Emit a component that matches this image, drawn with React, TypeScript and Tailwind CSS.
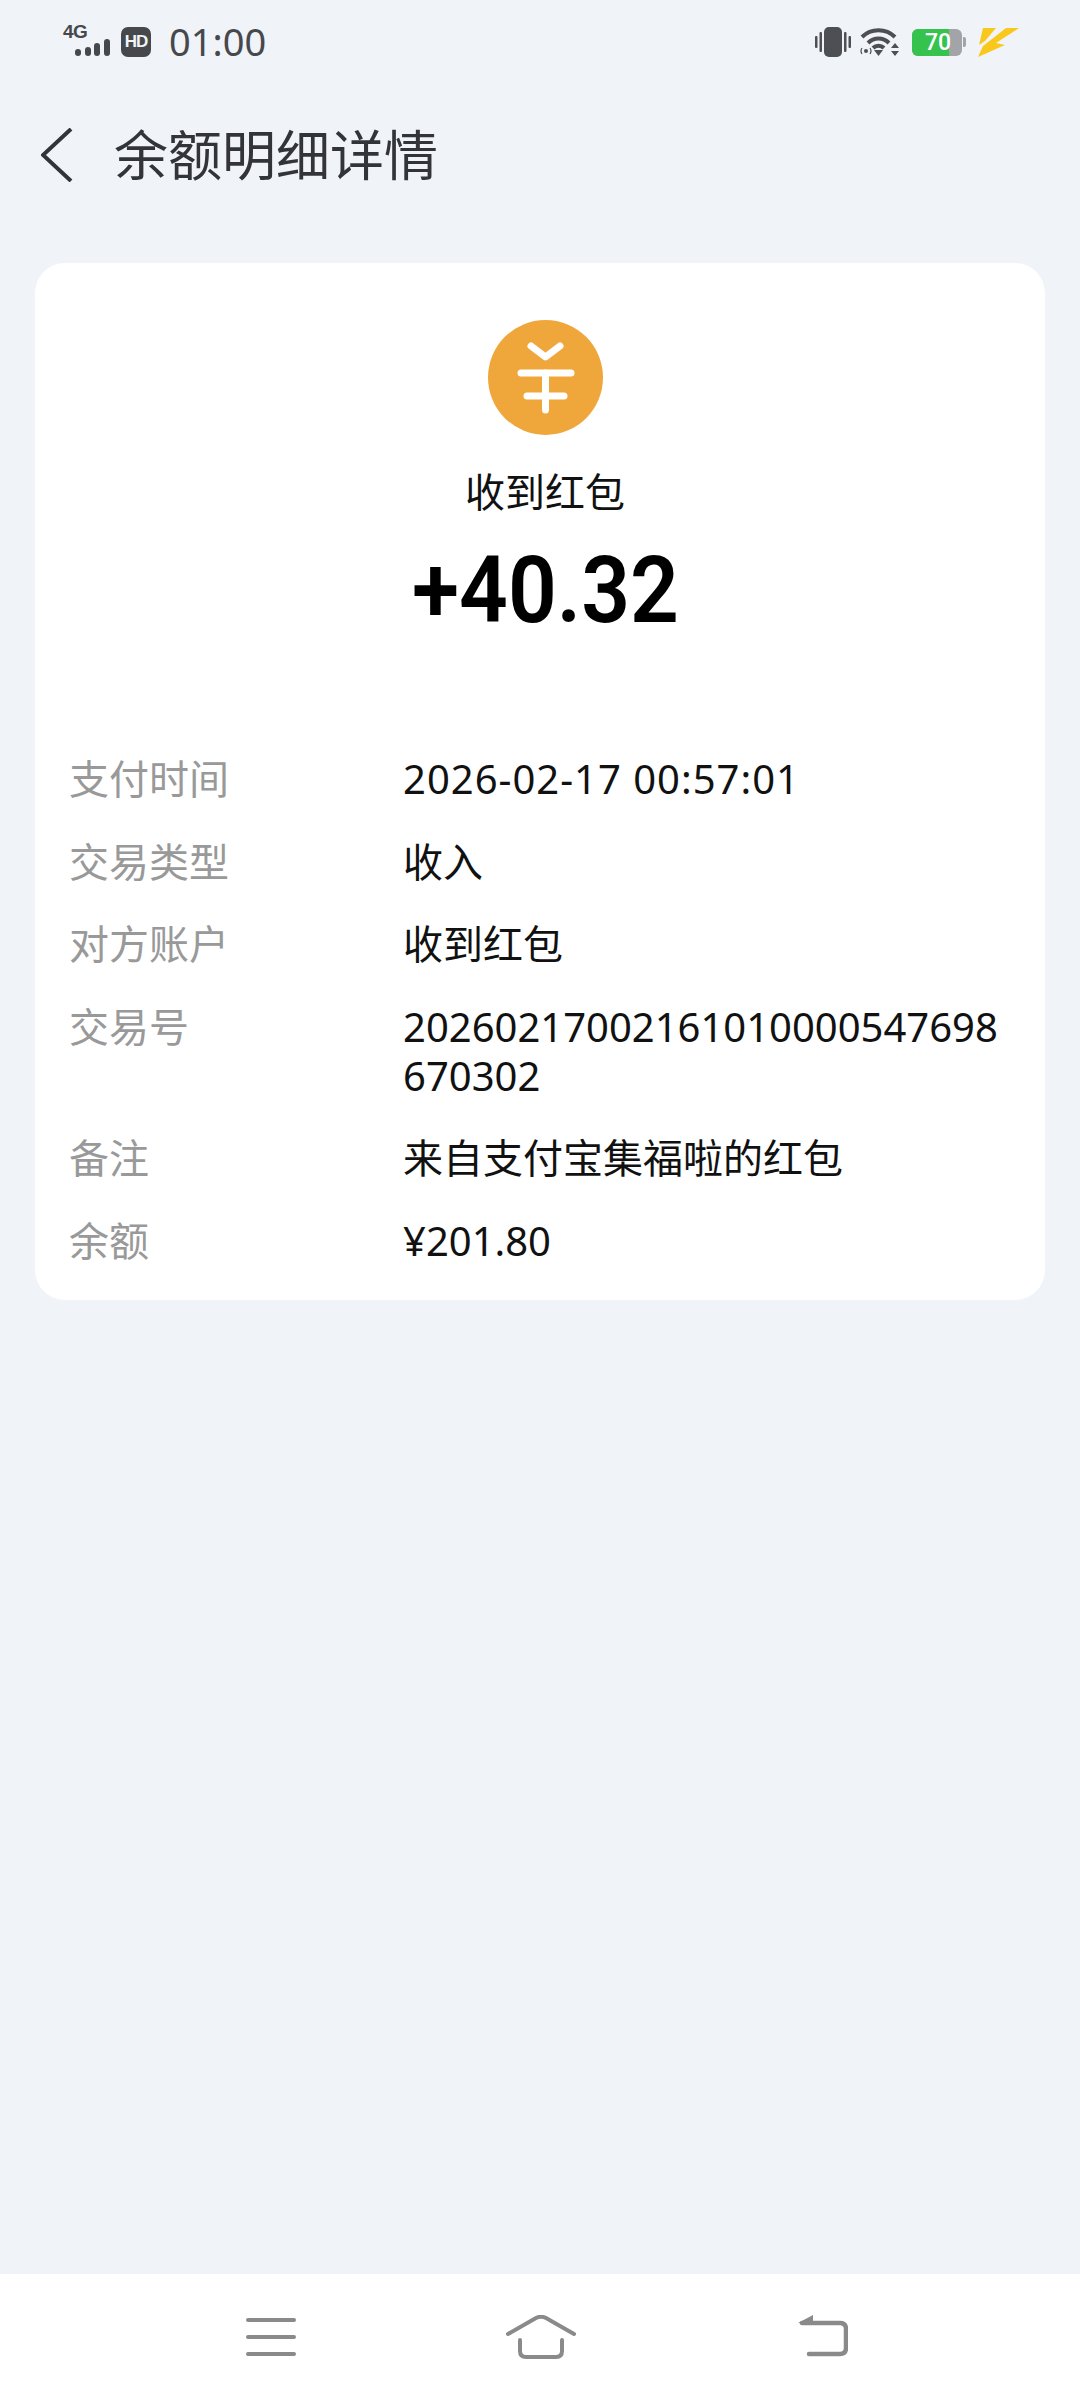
const FONT = "font-['Noto_Sans','Noto_Sans_CJK_SC',sans-serif]";

const rows = [
  { label: "支付时间", lines: ["2026-02-17 00:57:01"], wide: true },
  { label: "交易类型", lines: ["收入"] },
  { label: "对方账户", lines: ["收到红包"] },
  { label: "交易号", lines: ["20260217002161010000547698", "670302"] },
  { label: "备注", lines: ["来自支付宝集福啦的红包"] },
  { label: "余额", lines: ["¥201.80"] },
];

function SignalIcon() {
  return (
    <div className="relative h-[32px] w-[47px]">
      <span className="absolute left-0 top-[-4px] font-['Liberation_Sans',sans-serif] text-[19px] font-bold leading-[20px] tracking-[-0.5px] text-[#46484c]">
        4G
      </span>
      <svg viewBox="0 0 47 32" className="absolute inset-0 h-[32px] w-[47px]" fill="#46484c">
        <rect x="12" y="23" width="6" height="7" rx="3" />
        <rect x="22" y="21" width="6" height="9" rx="3" />
        <rect x="31" y="17" width="6" height="13" rx="3" />
        <rect x="41" y="13" width="6" height="17" rx="3" />
      </svg>
    </div>
  );
}

function StatusBar() {
  return (
    <div className="flex h-[84px] shrink-0 items-center justify-between pl-[63px] pr-[60px]">
      <div className="flex items-center">
        <SignalIcon />
        <div className="ml-[11px] flex h-[30px] w-[30px] items-center justify-center rounded-[7px] bg-[#46484c] font-['Liberation_Sans',sans-serif] text-[17px] font-bold tracking-[-1px] text-[#f0f3f8]">
          HD
        </div>
        <span className="ml-[18px] -translate-y-[1px] font-['Noto_Sans',sans-serif] text-[38px] leading-[44px] text-[#46484c]">01:00</span>
      </div>
      <div className="flex items-center">
        <svg viewBox="0 0 36 30" className="h-[30px] w-[36px]" fill="#4d4f53">
          <rect x="9" y="0" width="18" height="30" rx="5" />
          <rect x="0" y="9" width="2.5" height="12" rx="1" />
          <rect x="4.5" y="5" width="2.5" height="20" rx="1" />
          <rect x="29" y="5" width="2.5" height="20" rx="1" />
          <rect x="33.5" y="9" width="2.5" height="12" rx="1" />
        </svg>
        <svg viewBox="0 0 41 28" className="ml-[9px] h-[28px] w-[41px]">
          <g fill="none" stroke="#4d4f53" strokeWidth="4">
            <path d="M2 9 C11 0 26 0 35 9" />
            <path d="M8 15 C14 9 23 9 29 15" />
            <path d="M13 20 C16 17 21 17 24 20" />
          </g>
          <path d="M14 22 L23 22 L18.5 28 Z" fill="#4d4f53" />
          <path d="M35 15 L39 20 L31 20 Z M31 23 L39 23 L35 28 Z" fill="#4d4f53" />
          <circle cx="6" cy="23" r="2" fill="#4d4f53" />
          <path d="M2 20 Q0 23 2 26 M10 20 Q12 23 10 26" fill="none" stroke="#4d4f53" strokeWidth="1.2" />
        </svg>
        <div className="ml-[11px] flex h-[27px] items-center">
          <div className="relative flex h-[27px] w-[50px] items-center overflow-hidden rounded-[6px] bg-[#a3a4a8]">
            <div className="h-full w-[37px] bg-[#35c34e]" />
            <span className="absolute left-[13px] font-['Roboto',sans-serif] text-[23px] font-medium leading-[27px] text-white">
              70
            </span>
          </div>
          <div className="ml-[1px] h-[10px] w-[3px] rounded-r-[2px] bg-[#a3a4a8]" />
        </div>
        <svg viewBox="0 0 42 31" className="ml-[12px] h-[31px] w-[42px]" fill="#f8c91c">
          <path d="M5 1 L18 1 L7 14 L1 18 Z" />
          <path d="M28 1 L41 1 L18 16 L27 18 L0 30 L5 19 Z" />
        </svg>
      </div>
    </div>
  );
}

function Header() {
  return (
    <div className="flex h-[142px] shrink-0 items-center pl-[41px]">
      <svg viewBox="0 0 32 54" className="h-[54px] w-[32px]" fill="none" stroke="#333438" strokeWidth="4">
        <path d="M30 1 L2 27 L30 53" />
      </svg>
      <h1 className={`ml-[41px] ${FONT} text-[54px] font-normal leading-[60px] text-[#333438]`}>余额明细详情</h1>
    </div>
  );
}

function YuanIcon() {
  return (
    <div className="flex h-[115px] w-[115px] items-center justify-center rounded-full bg-[#efa73b]">
      <svg viewBox="0 0 115 115" className="h-[115px] w-[115px]" fill="none" stroke="white" strokeWidth="7" strokeLinecap="round" strokeLinejoin="round">
        <path d="M43 26 L57.5 37 L72 26" />
        <path d="M33 53 L83 53" />
        <path d="M39 76 L76 76" />
        <path d="M57.5 53 L57.5 90" />
      </svg>
    </div>
  );
}

function DetailCard() {
  return (
    <div className="mx-[35px] mt-[37px] h-[1037px] rounded-[30px] bg-white pl-[34px] pt-[57px]">
      <div className="flex flex-col items-center pr-[24px]">
        <YuanIcon />
        <p className={`mt-[27px] ${FONT} text-[40px] leading-[60px] text-[#111]`}>收到红包</p>
        <p className="mt-[19px] scale-x-[0.93] font-['Roboto',sans-serif] text-[92px] font-semibold leading-[100px] text-black">
          +40.32
        </p>
      </div>
      <div className="mt-[113px] flex flex-col gap-[33.5px]">
        {rows.map((row) => (
          <div key={row.label} className={`flex ${FONT} text-[40px] leading-[49px]`}>
            <span className="w-[334px] shrink-0 text-[#999]">{row.label}</span>
            <div className={`w-[610px] text-[#111] ${row.wide ? "tracking-[1px]" : ""}`}>
              {row.lines.map((line) => (
                <div key={line}>{line}</div>
              ))}
            </div>
          </div>
        ))}
      </div>
    </div>
  );
}

function NavBar() {
  return (
    <div className="flex h-[126px] shrink-0 items-center justify-between bg-white pl-[246px] pr-[232px]">
      <svg viewBox="0 0 50 38" className="h-[38px] w-[50px]" fill="none" stroke="#8a8a8a" strokeWidth="4" strokeLinecap="round">
        <path d="M2 2 L48 2 M2 19 L48 19 M2 36 L48 36" />
      </svg>
      <svg viewBox="0 0 70 44" className="mr-[12px] h-[44px] w-[70px]" fill="none" stroke="#8a8a8a" strokeWidth="4" strokeLinecap="round" strokeLinejoin="round">
        <path d="M2 19 L30 3 Q35 0.5 40 3 L68 19" />
        <path d="M14 25 L14 36 Q14 42 20 42 L50 42 Q56 42 56 36 L56 25" />
      </svg>
      <svg viewBox="0 0 50 44" className="-translate-y-[1px] h-[44px] w-[50px]" fill="none" stroke="#8a8a8a" strokeWidth="4.5" strokeLinecap="round" strokeLinejoin="round">
        <path d="M4 9 L42 9 Q48 9 48 15 L48 34 Q48 40 42 40 L11 40" />
        <path d="M15 1 L0 9 L15 11 Z" fill="#8a8a8a" stroke="none" />
      </svg>
    </div>
  );
}

export default function App() {
  return (
    <div className="flex h-[2400px] w-[1080px] flex-col bg-[#f0f3f8]">
      <StatusBar />
      <Header />
      <DetailCard />
      <div className="flex-1" />
      <NavBar />
    </div>
  );
}
